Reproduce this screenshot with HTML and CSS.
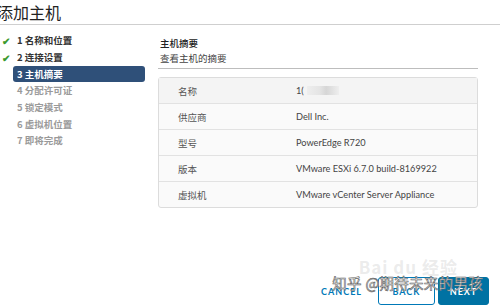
FILE: index.html
```html
<!DOCTYPE html>
<html lang="zh-CN">
<head>
    <meta charset="UTF-8">
    <meta name="viewport" content="width=device-width, initial-scale=1.0">
    <title>添加主机</title>
    <link rel="stylesheet" href="styles.css">
</head>
<body>
    <div class="page">
        <h1 class="title">添加主机</h1>

        <div class="wizard">
            <ul class="steps">
                <li class="step done"><span class="check">✔</span><span class="label">1 名称和位置</span></li>
                <li class="step done"><span class="check">✔</span><span class="label">2 连接设置</span></li>
                <li class="step active"><span class="check"></span><span class="label">3 主机摘要</span></li>
                <li class="step"><span class="check"></span><span class="label">4 分配许可证</span></li>
                <li class="step"><span class="check"></span><span class="label">5 锁定模式</span></li>
                <li class="step"><span class="check"></span><span class="label">6 虚拟机位置</span></li>
                <li class="step"><span class="check"></span><span class="label">7 即将完成</span></li>
            </ul>

            <div class="content">
                <div class="content-header">
                    <div class="content-title">主机摘要</div>
                    <div class="content-sub">查看主机的摘要</div>
                </div>

                <div class="summary">
                    <div class="row first">
                        <div class="key">名称</div>
                        <div class="val">1(<span class="blur"></span></div>
                    </div>
                    <div class="row">
                        <div class="key">供应商</div>
                        <div class="val">Dell Inc.</div>
                    </div>
                    <div class="row">
                        <div class="key">型号</div>
                        <div class="val">PowerEdge R720</div>
                    </div>
                    <div class="row">
                        <div class="key">版本</div>
                        <div class="val">VMware ESXi 6.7.0 build-8169922</div>
                    </div>
                    <div class="row">
                        <div class="key">虚拟机</div>
                        <div class="val">VMware vCenter Server Appliance</div>
                    </div>
                </div>
            </div>
        </div>

        <div class="footer">
            <button class="btn btn-link">Cancel</button>
            <button class="btn btn-outline">Back</button>
            <button class="btn btn-primary">Next</button>
            <div class="mark-baidu">Bai du 经验</div>
            <div class="mark-zhihu">知乎 @期待未来的男孩</div>
        </div>
    </div>
</body>
</html>
```

FILE: styles.css
```css
:root {
    --text-dark: #333;
    --text-muted: #9a9a9a;
    --active-bg: #2f5079;
    --border: #dcdcdc;
    --link: #0079b8;
    --primary: #0072a3;
}

* {
    box-sizing: border-box;
}

body {
    margin: 0;
    background: #fff;
    font-family: "Noto Sans CJK SC", "Noto Sans", sans-serif;
    color: var(--text-dark);
}

.page {
    width: 500px;
    height: 306px;
    overflow: hidden;
    display: flex;
    flex-direction: column;
}

.title {
    margin: 0 0 0 -3px;
    height: 25px;
    font-size: 16px;
    font-weight: 400;
    line-height: 24px;
    color: #222;
    border-bottom: 1px solid #cfcfcf;
}

.wizard {
    display: flex;
    height: 245px;
}

.steps {
    list-style: none;
    margin: 0;
    padding: 7px 0 0 0;
    width: 158px;
}

.step {
    display: flex;
    align-items: center;
    height: 16.7px;
    font-size: 9.5px;
    font-weight: 700;
    color: var(--text-muted);
}

.step.done {
    color: var(--text-dark);
}

.check {
    width: 13px;
    padding-left: 2px;
    font-size: 10px;
    color: #3c9a2e;
}

.label {
    width: 132px;
    height: 16px;
    line-height: 16px;
    padding-left: 4px;
    border-radius: 3px;
}

.step.active .label {
    background: var(--active-bg);
    color: #fff;
}

.content {
    width: 320px;
    padding-top: 11px;
}

.content-header {
    padding: 0 0 2px 2px;
    border-bottom: 1px solid #bdbdbd;
    font-size: 9.5px;
    line-height: 15px;
}

.content-title {
    font-weight: 500;
    color: #222;
}

.content-sub {
    color: #444;
}

.summary {
    margin-top: 8px;
    border: 1px solid var(--border);
    border-radius: 3px;
    background: #fafafa;
}

.row {
    display: flex;
    align-items: center;
    height: 26px;
    border-top: 1px solid #e2e2e2;
    font-size: 9.5px;
    color: #555;
}

.row.first {
    border-top: none;
    height: 25px;
    background: #f4f4f4;
}

.key {
    width: 137px;
    padding-left: 19px;
}

.val {
    font-family: "Lato", "Noto Sans", sans-serif;
    font-size: 9.2px;
    color: #444;
    display: flex;
    align-items: center;
}

.blur {
    display: inline-block;
    width: 32px;
    height: 9px;
    margin-left: 3px;
    background: linear-gradient(90deg, #eee 0, #e4e4e4 40%, #d6d6d6 60%, #eee 100%);
}

.footer {
    position: relative;
    flex: 1;
    display: flex;
    justify-content: flex-end;
    align-items: flex-end;
    padding: 0 11px 1px 0;
    gap: 3px;
}

.btn {
    height: 28px;
    font-family: "Lato", "Noto Sans", sans-serif;
    font-size: 9px;
    font-weight: 700;
    letter-spacing: 1px;
    text-transform: uppercase;
    border-radius: 3px;
    cursor: pointer;
}

.btn-link {
    background: none;
    border: none;
    color: var(--link);
    margin-right: 13px;
    padding: 0;
}

.btn-outline {
    width: 57px;
    background: #fff;
    border: 1px solid var(--link);
    color: var(--link);
}

.btn-primary {
    width: 51px;
    background: var(--primary);
    border: 1px solid var(--primary);
    color: #fff;
}

.mark-baidu {
    position: absolute;
    right: 42px;
    top: -16px;
    font-size: 17px;
    font-weight: 700;
    color: rgba(190, 190, 190, 0.3);
    letter-spacing: 1px;
}

.mark-zhihu {
    position: absolute;
    right: 17px;
    top: 3px;
    font-size: 14.5px;
    line-height: 20px;
    color: #fff;
    -webkit-text-stroke: 0.6px #666;
    letter-spacing: 0.3px;
}
```
